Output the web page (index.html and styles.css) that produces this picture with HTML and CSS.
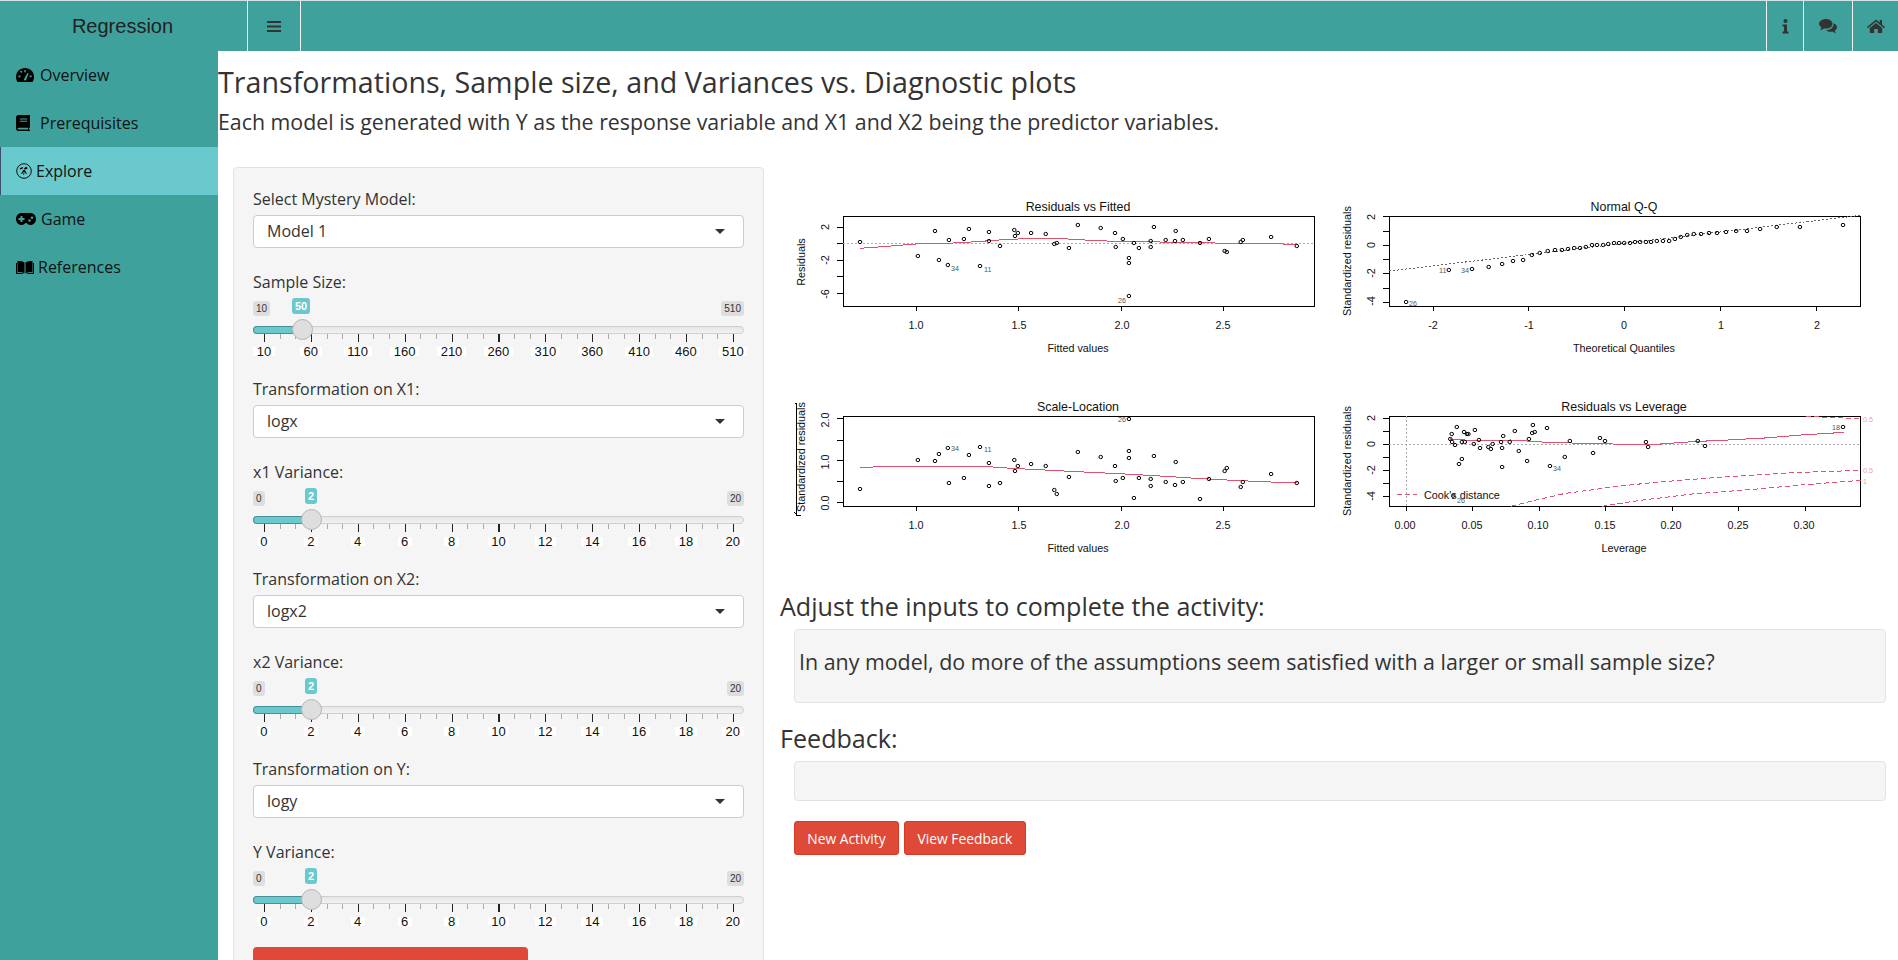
FILE: index.html
```html
<!DOCTYPE html>
<html lang="en">
<head>
<meta charset="utf-8">
<title>Regression</title>
<link rel="stylesheet" href="styles.css">
</head>
<body>
<header class="topbar">
  <div class="brand">Regression</div>
  <button class="nav-btn toggle" aria-label="Toggle menu">
    <svg class="ico-bars" viewBox="0 0 14 11"><path d="M0 0h14v2H0zM0 4.500h14v2H0zM0 9h14v2H0z"/></svg>
  </button>
  <div class="spacer"></div>
  <button class="nav-btn info" aria-label="Info">
    <svg class="ico-info" viewBox="0 0 7 15"><circle cx="3.500" cy="2" r="2"/><path d="M0.500 5.500h4.500v7h1.500v2H0.500v-2H2v-5H0.500z"/></svg>
  </button>
  <button class="nav-btn chat" aria-label="Comments">
    <svg class="ico-chat" viewBox="0 0 18 15"><path d="M7 0c3.900 0 6.500 2.200 6.500 4.800S10.900 9.600 7 9.600c-.7 0-1.300-.1-1.900-.2C3.900 10.300 2.600 10.800 1 11c.8-.8 1.300-1.700 1.400-2.700C.9 7.400 0 6.200 0 4.800 0 2.200 3.100 0 7 0z"/><path d="M14.600 4.300c2 .8 3.400 2.200 3.400 3.900 0 1.300-.8 2.500-2.200 3.300.1 1 .6 1.900 1.400 2.700-1.600-.2-2.900-.7-4-1.600-.6.100-1.200.2-1.900.2-1.900 0-3.600-.6-4.700-1.500 4.300 0 8.300-2.300 8-7z"/></svg>
  </button>
  <button class="nav-btn home" aria-label="Home">
    <svg class="ico-home" viewBox="0 0 18 14"><path d="M9 0.500 0 8l1 1.200L9 2.600l8 6.600L18 8l-3-2.500V1h-2.200v2.600z"/><path d="M9 4 2.800 9.100V14H7.200V10h3.600v4h4.400V9.100z"/></svg>
  </button>
</header>
<div class="body-row">
  <nav class="sidebar">
    <a class="nav-item"><svg class="nav-ico" viewBox="0 0 18 14"><path class="solid" d="M9 0C4 0 0 3.700 0 8.800c0 1.900.5 3.500 1.400 5.200h15.200c.9-1.700 1.400-3.300 1.400-5.200C18 3.700 14 0 9 0z"/><path class="cut" d="M8.200 2.200h1.600v2H8.200zM2.400 7.600h2v1.600h-2zM13.600 7.600h2v1.600h-2zM4 3.600l1.200-1.100 1.300 1.400-1.100 1.100zM7.900 11.500 11.300 5l1.300.6-2.600 6.600a1.300 1.300 0 0 1-2.100-.7z"/></svg><span>Overview</span></a>
    <a class="nav-item"><svg class="nav-ico book" viewBox="0 0 14 16"><path class="solid" d="M2.300 0H14v12.300l-.9.6c-.3.500-.3 1 0 1.500l.9.600V16H2.500C1 16 0 15 0 13.500V2.300C0 1 1 0 2.300 0z"/><path class="cut" d="M3.800 3.400h7.400v1H3.800zM3.800 5.800h7.400v1H3.800zM2.500 12.800h9.600c-.2.700-.2 1 0 1.800H2.500c-1.200 0-1.200-1.800 0-1.800z"/></svg><span>Prerequisites</span></a>
    <a class="nav-item active"><svg class="nav-ico explore" viewBox="0 0 16 16"><circle class="ring" cx="8" cy="8" r="7.300"/><path class="solid" d="M3.700 5.300l3-1.400.5 1.300-3 1.400zM8 5l2.800-1.200.8 1.700-2.800 1.200zM7.300 7h1.600l2 4h-1L8.600 8.600 8 12H7.400l.3-3.600L6 11H5z"/></svg><span>Explore</span></a>
    <a class="nav-item"><svg class="nav-ico pad" viewBox="0 0 20 12"><path class="solid" d="M5.500 0h9C17.600 0 20 2.600 20 6s-2.400 6-5.500 6c-1.700 0-3-.8-4-2h-1c-1 1.200-2.300 2-4 2C2.400 12 0 9.400 0 6s2.400-6 5.500-6z"/><path class="cut" d="M4.500 3h2v2h2v2h-2v2h-2V7h-2V5h2z"/><circle class="cut" cx="13.500" cy="7.500" r="1.300"/><circle class="cut" cx="16" cy="4.700" r="1.300"/></svg><span>Game</span></a>
    <a class="nav-item"><svg class="nav-ico open" viewBox="0 0 18 13"><path class="solid" d="M1.500 0C4 0 7 .2 8.500 1.600V12.300C7 11.400 4 11 1.500 11zM16.500 0C14 0 11 .2 9.500 1.600V12.300C11 11.400 14 11 16.500 11zM0 2h1v9.800c2.500 0 5 .2 7 1.200H0zM18 2h-1v9.800c-2.500 0-5 .2-7 1.200h8z"/></svg><span>References</span></a>
  </nav>
  <main class="content">
    <h1 class="page-title">Transformations, Sample size, and Variances vs. Diagnostic plots</h1>
    <h2 class="page-sub">Each model is generated with Y as the response variable and X1 and X2 being the predictor variables.</h2>
    <div class="columns">
      <form class="controls">
        <div class="field">
          <label>Select Mystery Model:</label>
          <div class="select">Model 1</div>
        </div>
        <div class="slider-field">
          <label>Sample Size:</label>
          <div class="slider">
            <span class="badge min">10</span><span class="badge max">510</span>
            <span class="bubble" style="left: 39px">50</span>
            <div class="track"><div class="fill" style="width: 48px"></div><div class="handle" style="left: 37.500px"></div></div>
            <div class="ticks"></div>
            <div class="tick-labels"><span>10</span><span>60</span><span>110</span><span>160</span><span>210</span><span>260</span><span>310</span><span>360</span><span>410</span><span>460</span><span>510</span></div>
          </div>
        </div>
        <div class="field">
          <label>Transformation on X1:</label>
          <div class="select">logx</div>
        </div>
        <div class="slider-field">
          <label>x1 Variance:</label>
          <div class="slider">
            <span class="badge min">0</span><span class="badge max">20</span>
            <span class="bubble" style="left: 52px">2</span>
            <div class="track"><div class="fill" style="width: 57px"></div><div class="handle" style="left: 46.500px"></div></div>
            <div class="ticks"></div>
            <div class="tick-labels"><span>0</span><span>2</span><span>4</span><span>6</span><span>8</span><span>10</span><span>12</span><span>14</span><span>16</span><span>18</span><span>20</span></div>
          </div>
        </div>
        <div class="field">
          <label>Transformation on X2:</label>
          <div class="select">logx2</div>
        </div>
        <div class="slider-field">
          <label>x2 Variance:</label>
          <div class="slider">
            <span class="badge min">0</span><span class="badge max">20</span>
            <span class="bubble" style="left: 52px">2</span>
            <div class="track"><div class="fill" style="width: 57px"></div><div class="handle" style="left: 46.500px"></div></div>
            <div class="ticks"></div>
            <div class="tick-labels"><span>0</span><span>2</span><span>4</span><span>6</span><span>8</span><span>10</span><span>12</span><span>14</span><span>16</span><span>18</span><span>20</span></div>
          </div>
        </div>
        <div class="field">
          <label>Transformation on Y:</label>
          <div class="select">logy</div>
        </div>
        <div class="slider-field">
          <label>Y Variance:</label>
          <div class="slider">
            <span class="badge min">0</span><span class="badge max">20</span>
            <span class="bubble" style="left: 52px">2</span>
            <div class="track"><div class="fill" style="width: 57px"></div><div class="handle" style="left: 46.500px"></div></div>
            <div class="ticks"></div>
            <div class="tick-labels"><span>0</span><span>2</span><span>4</span><span>6</span><span>8</span><span>10</span><span>12</span><span>14</span><span>16</span><span>18</span><span>20</span></div>
          </div>
        </div>
        <div class="wide-btn"></div>
      </form>
      <section class="results">
        <svg class="plots" viewBox="0 0 1118 380" role="img" aria-label="Diagnostic plots">
          <g class="panel" transform="scale(.35714 .33333)">
            <rect class="box" x="177" y="79" width="1320" height="270"/>
            <path class="axis" d="M382 349v15M669 349v15M957 349v15M1241 349v15M177 112h-16M177 161h-16M177 211h-16M177 261h-16M177 311h-16"/>
            <path class="ref" d="M177 160H1497"/>
            <path class="smooth" d="M224 175 300 169 380 162 470 160 550 155 640 148 720 145 790 146 870 151 960 155 1060 156 1170 157 1240 160 1330 160 1447 163"/>
            <g class="pts"><circle cx="224" cy="156"/><circle cx="386" cy="198"/><circle cx="434" cy="123"/><circle cx="445" cy="210"/><circle cx="470" cy="225"/><circle cx="473" cy="150"/><circle cx="515" cy="147"/><circle cx="529" cy="117"/><circle cx="560" cy="228"/><circle cx="585" cy="126"/><circle cx="585" cy="153"/><circle cx="616" cy="168"/><circle cx="656" cy="120"/><circle cx="658" cy="138"/><circle cx="666" cy="129"/><circle cx="703" cy="129"/><circle cx="744" cy="132"/><circle cx="768" cy="162"/><circle cx="775" cy="159"/><circle cx="809" cy="174"/><circle cx="834" cy="105"/><circle cx="898" cy="114"/><circle cx="938" cy="129"/><circle cx="940" cy="171"/><circle cx="960" cy="147"/><circle cx="977" cy="204"/><circle cx="977" cy="219"/><circle cx="977" cy="318"/><circle cx="991" cy="159"/><circle cx="1005" cy="174"/><circle cx="1038" cy="153"/><circle cx="1038" cy="171"/><circle cx="1047" cy="111"/><circle cx="1080" cy="150"/><circle cx="1106" cy="153"/><circle cx="1108" cy="123"/><circle cx="1128" cy="150"/><circle cx="1176" cy="159"/><circle cx="1201" cy="147"/><circle cx="1245" cy="183"/><circle cx="1251" cy="186"/><circle cx="1290" cy="156"/><circle cx="1296" cy="150"/><circle cx="1375" cy="141"/><circle cx="1447" cy="168"/></g>
          </g>
          <g class="panel" transform="scale(.35714 .33333)">
            <rect class="box" x="177" y="679" width="1320" height="270"/>
            <path class="axis" d="M382 949v15M669 949v15M957 949v15M1241 949v15M177 687h-16M177 751h-16M177 813h-16M177 875h-16M177 937h-16"/>
            <path class="smooth" d="M224 832 300 830 400 829 570 829 650 835 740 840 850 846 950 851 1050 857 1150 864 1250 870 1350 875 1447 879"/>
            <g class="pts"><circle cx="224" cy="897"/><circle cx="386" cy="810"/><circle cx="434" cy="813"/><circle cx="445" cy="792"/><circle cx="470" cy="774"/><circle cx="473" cy="879"/><circle cx="515" cy="864"/><circle cx="529" cy="795"/><circle cx="560" cy="771"/><circle cx="585" cy="819"/><circle cx="585" cy="888"/><circle cx="616" cy="879"/><circle cx="656" cy="810"/><circle cx="658" cy="843"/><circle cx="666" cy="828"/><circle cx="703" cy="822"/><circle cx="744" cy="828"/><circle cx="768" cy="900"/><circle cx="775" cy="912"/><circle cx="809" cy="861"/><circle cx="834" cy="786"/><circle cx="898" cy="801"/><circle cx="938" cy="828"/><circle cx="940" cy="873"/><circle cx="960" cy="864"/><circle cx="977" cy="783"/><circle cx="977" cy="804"/><circle cx="977" cy="687"/><circle cx="991" cy="924"/><circle cx="1005" cy="864"/><circle cx="1038" cy="867"/><circle cx="1038" cy="888"/><circle cx="1047" cy="798"/><circle cx="1080" cy="876"/><circle cx="1106" cy="885"/><circle cx="1108" cy="816"/><circle cx="1128" cy="876"/><circle cx="1176" cy="927"/><circle cx="1201" cy="867"/><circle cx="1245" cy="843"/><circle cx="1251" cy="834"/><circle cx="1290" cy="891"/><circle cx="1296" cy="876"/><circle cx="1375" cy="852"/><circle cx="1447" cy="879"/></g>
          </g>
          <g class="panel" transform="translate(550 0) scale(.36232 .33333)">
            <rect class="box" x="164" y="79" width="1301" height="270"/>
            <path class="axis" d="M286 349v15M549 349v15M813 349v15M1079 349v15M1344 349v15M164 81h-17M164 124h-17M164 166h-17M164 208h-17M164 252h-17M164 295h-17M164 338h-17"/>
            <path class="qq" d="M164 243 1465 76"/>
            <g class="pts"><circle cx="210" cy="336"/><circle cx="328" cy="240"/><circle cx="392" cy="237"/><circle cx="438" cy="231"/><circle cx="475" cy="222"/><circle cx="505" cy="213"/><circle cx="533" cy="210"/><circle cx="557" cy="195"/><circle cx="579" cy="189"/><circle cx="601" cy="183"/><circle cx="621" cy="180"/><circle cx="640" cy="180"/><circle cx="657" cy="177"/><circle cx="674" cy="174"/><circle cx="690" cy="174"/><circle cx="706" cy="171"/><circle cx="723" cy="165"/><circle cx="737" cy="165"/><circle cx="754" cy="165"/><circle cx="768" cy="162"/><circle cx="784" cy="159"/><circle cx="798" cy="159"/><circle cx="812" cy="159"/><circle cx="828" cy="159"/><circle cx="842" cy="156"/><circle cx="856" cy="156"/><circle cx="872" cy="156"/><circle cx="886" cy="156"/><circle cx="902" cy="153"/><circle cx="919" cy="153"/><circle cx="936" cy="153"/><circle cx="952" cy="147"/><circle cx="968" cy="141"/><circle cx="986" cy="135"/><circle cx="1004" cy="132"/><circle cx="1024" cy="132"/><circle cx="1046" cy="129"/><circle cx="1068" cy="129"/><circle cx="1093" cy="126"/><circle cx="1121" cy="123"/><circle cx="1151" cy="123"/><circle cx="1187" cy="117"/><circle cx="1233" cy="111"/><circle cx="1297" cy="111"/><circle cx="1416" cy="105"/></g>
          </g>
          <g class="panel" transform="translate(550 0) scale(.36232 .33333)">
            <rect class="box" x="164" y="679" width="1301" height="270"/>
            <path class="axis" d="M211 949v15M394 949v15M578 949v15M761 949v15M945 949v15M1128 949v15M1312 949v15M164 685h-17M164 724h-17M164 763h-17M164 802h-17M164 841h-17M164 880h-17M164 919h-17"/>
            <path class="ref" d="M164 763H1465M211 679V949"/>
            <path class="smooth" d="M332 747 400 752 500 750 600 757 700 760 820 763 900 763 1000 755 1100 750 1200 744 1300 735 1420 727"/>
            <path class="cook" d="M1315 679 1380 682 1465 686M500 949 560 932 650 910 720 900 800 888 900 877 1000 868 1100 860 1200 853 1300 847 1465 841M750 949 850 932 1000 912 1100 904 1200 895 1300 885 1465 871M185 914H240"/>
            <g class="pts"><circle cx="332" cy="747"/><circle cx="336" cy="732"/><circle cx="337" cy="756"/><circle cx="345" cy="765"/><circle cx="350" cy="711"/><circle cx="356" cy="822"/><circle cx="364" cy="807"/><circle cx="364" cy="756"/><circle cx="370" cy="726"/><circle cx="372" cy="756"/><circle cx="378" cy="732"/><circle cx="382" cy="732"/><circle cx="397" cy="762"/><circle cx="400" cy="720"/><circle cx="411" cy="750"/><circle cx="414" cy="774"/><circle cx="437" cy="771"/><circle cx="444" cy="777"/><circle cx="449" cy="762"/><circle cx="472" cy="756"/><circle cx="475" cy="774"/><circle cx="475" cy="831"/><circle cx="478" cy="738"/><circle cx="496" cy="756"/><circle cx="510" cy="723"/><circle cx="521" cy="783"/><circle cx="544" cy="813"/><circle cx="549" cy="747"/><circle cx="558" cy="729"/><circle cx="560" cy="705"/><circle cx="565" cy="726"/><circle cx="599" cy="714"/><circle cx="607" cy="828"/><circle cx="648" cy="801"/><circle cx="662" cy="753"/><circle cx="726" cy="789"/><circle cx="745" cy="744"/><circle cx="759" cy="753"/><circle cx="872" cy="756"/><circle cx="878" cy="771"/><circle cx="1015" cy="753"/><circle cx="1035" cy="768"/><circle cx="1416" cy="711"/><circle cx="340" cy="917"/></g>
          </g>
          <g class="labels">
            <text class="title" x="298" y="21">Residuals vs Fitted</text>
            <text class="title" x="298" y="221">Scale-Location</text>
            <text class="title" x="844" y="21">Normal Q-Q</text>
            <text class="title" x="844" y="221">Residuals vs Leverage</text>
            <text x="136" y="139">1.0</text><text x="239" y="139">1.5</text><text x="342" y="139">2.0</text><text x="443" y="139">2.5</text>
            <text x="136" y="339">1.0</text><text x="239" y="339">1.5</text><text x="342" y="339">2.0</text><text x="443" y="339">2.5</text>
            <text x="298" y="162">Fitted values</text>
            <text x="298" y="362">Fitted values</text>
            <text x="653" y="139">-2</text><text x="749" y="139">-1</text><text x="844" y="139">0</text><text x="941" y="139">1</text><text x="1037" y="139">2</text>
            <text x="844" y="162">Theoretical Quantiles</text>
            <text x="625" y="339">0.00</text><text x="692" y="339">0.05</text><text x="758" y="339">0.10</text><text x="825" y="339">0.15</text><text x="891" y="339">0.20</text><text x="958" y="339">0.25</text><text x="1024" y="339">0.30</text>
            <text x="844" y="362">Leverage</text>
            <text transform="translate(49 37) rotate(-90)">2</text>
            <text transform="translate(49 70) rotate(-90)">-2</text>
            <text transform="translate(49 104) rotate(-90)">-6</text>
            <text transform="translate(25 72) rotate(-90)">Residuals</text>
            <text transform="translate(49 230) rotate(-90)">2.0</text>
            <text transform="translate(49 272) rotate(-90)">1.0</text>
            <text transform="translate(49 313) rotate(-90)">0.0</text>
            <text transform="translate(25 267) rotate(-90)">Standardized residuals</text>
            <text transform="translate(595 27) rotate(-90)">2</text>
            <text transform="translate(595 55) rotate(-90)">0</text>
            <text transform="translate(595 83) rotate(-90)">-2</text>
            <text transform="translate(595 111) rotate(-90)">-4</text>
            <text transform="translate(571 71) rotate(-90)">Standardized residuals</text>
            <text transform="translate(595 228) rotate(-90)">2</text>
            <text transform="translate(595 254) rotate(-90)">0</text>
            <text transform="translate(595 280) rotate(-90)">-2</text>
            <text transform="translate(595 306) rotate(-90)">-4</text>
            <text transform="translate(571 271) rotate(-90)">Standardized residuals</text>
            <text class="legend" x="644" y="309">Cook's distance</text>
          </g>
          <path class="root" d="M14.700 213H16V325H21M14 322l3 3"/>
          <g class="ids">
            <text x="171" y="81">34</text><text x="204" y="82">11</text><text x="338" y="113">26</text>
            <text x="171" y="261">34</text><text x="204" y="262">11</text><text x="338" y="232">26</text>
            <text x="659" y="83">11</text><text x="681" y="83">34</text><text x="629" y="116">26</text>
            <text x="1052" y="240">18</text><text x="773" y="281">34</text><text x="677" y="313">26</text>
          </g>
          <g class="ids cook-ids">
            <text x="1083" y="232">0.5</text><text x="1083" y="283">0.5</text><text x="1083" y="294">1</text>
          </g>
        </svg>
        <h3 class="section-head first">Adjust the inputs to complete the activity:</h3>
        <div class="well question">In any model, do more of the assumptions seem satisfied with a larger or small sample size?</div>
        <h3 class="section-head second">Feedback:</h3>
        <div class="well feedback"></div>
        <div class="actions">
          <button class="btn new" type="button">New Activity</button>
          <button class="btn view" type="button">View Feedback</button>
        </div>
      </section>
    </div>
  </main>
</div>
</body>
</html>
```
FILE: styles.css
```css
* { box-sizing: border-box; }
html, body { margin: 0; height: 960px; overflow: hidden; }
body {
  width: 1898px;
  display: flex;
  flex-direction: column;
  font-family: "Open Sans", "Noto Sans", sans-serif;
  color: #333;
  background: #fff;
}

/* Top bar */
.topbar {
  flex: 0 0 51px;
  display: flex;
  background: #3fa19c;
  border-top: 1px solid #cfe6e4;
}
.brand {
  width: 247px;
  padding-right: 2px;
  font: 20px/50px "Liberation Sans", sans-serif;
  color: #222;
  text-align: center;
}
.spacer { flex: 1; border-left: 1px solid #f2f2f2; }
.nav-btn {
  display: flex;
  align-items: center;
  justify-content: center;
  padding: 0;
  background: none;
  border: 0;
  border-left: 1px solid #f2f2f2;
  fill: #333;
}
.toggle { width: 53px; }
.spacer + .info { width: 37px; }
.chat { width: 49px; }
.home { width: 46px; }
.ico-bars { width: 14px; height: 11px; }
.ico-info { width: 7px; height: 15px; }
.ico-chat { width: 18px; height: 15px; }
.ico-home { width: 18px; height: 14px; }

/* Sidebar */
.body-row { flex: 1; display: flex; min-height: 0; }
.sidebar { width: 218px; flex: none; background: #3fa19c; }
.nav-item {
  height: 48px;
  display: flex;
  align-items: center;
  padding-left: 16px;
  font-size: 16px;
  color: #111;
}
.nav-item.active { background: #69c9cc; border-left: 1px solid #3d4f6b; padding-left: 15px; }
.nav-ico { width: 18px; height: 14px; margin-right: 6px; }
.nav-ico.book { width: 14px; height: 16px; margin-right: 10px; }
.nav-ico.explore { width: 16px; height: 16px; margin-right: 4px; }
.nav-ico.pad { width: 20px; height: 12px; margin-right: 5px; }
.nav-ico.open { width: 18px; height: 13px; margin-right: 4px; }
.solid { fill: #000; }
.cut { fill: #3fa19c; }
.ring { fill: none; stroke: #111; stroke-width: 1; }

/* Content */
.content { flex: 1; min-width: 0; }
.page-title {
  margin: 11px 0 0;
  font-size: 28.670px;
  line-height: 40px;
  font-weight: 400;
}
.page-sub {
  margin: 5px 0 0;
  font-size: 21.350px;
  line-height: 30px;
  font-weight: 400;
}
.columns { display: flex; margin: 30px 0 0 15px; align-items: flex-start; }

/* Control panel */
.controls {
  flex: none;
  width: 531px;
  height: 820px;
  padding: 19px 19px;
  background: #f5f5f5;
  border: 1px solid #e3e3e3;
  border-radius: 4px;
}
.controls label { display: block; padding-top: 1px; font-size: 16px; line-height: 22px; }
.field { margin-bottom: 22px; }
.select {
  position: relative;
  height: 33px;
  margin-top: 5px;
  padding-left: 13px;
  font-size: 16px;
  line-height: 31px;
  color: #333;
  background: #fff;
  border: 1px solid #ccc;
  border-radius: 4px;
}
.select::after {
  content: "";
  position: absolute;
  right: 18px;
  top: 13px;
  border: 5px solid transparent;
  border-bottom: 0;
  border-top-color: #333;
}
.slider-field { height: 107px; }
.slider { position: relative; padding-top: 33px; }
.badge {
  position: absolute;
  top: 8px;
  padding: 0 3px;
  font: 10px/15px "Liberation Sans", sans-serif;
  color: #333;
  background: #dedede;
  border-radius: 3px;
}
.badge.min { left: 0; }
.badge.max { right: 0; }
.bubble {
  position: absolute;
  top: 5px;
  padding: 0 3px;
  font: 700 11px/16px "Liberation Sans", sans-serif;
  color: #fff;
  background: #69c9cc;
  border-radius: 3px;
}
.track {
  position: relative;
  height: 8px;
  background: linear-gradient(#e6e6e6, #f2f2f2);
  border: 1px solid #cfcfcf;
  border-radius: 4px;
}
.fill {
  height: 8px;
  margin: -1px;
  background: #69c9cc;
  border: 1px solid #4b8f96;
  border-right: 0;
  border-radius: 4px 0 0 4px;
}
.handle {
  position: absolute;
  top: -8px;
  width: 21px;
  height: 21px;
  background: #dedede;
  border: 1px solid #b5b5b5;
  border-radius: 50%;
  z-index: 1;
}
.ticks {
  height: 8px;
  margin: 0 10px 0 11px;
  background:
    repeating-linear-gradient(90deg, #222 0 1px, transparent 1px 46.900px) 0 0 / 100% 8px no-repeat,
    repeating-linear-gradient(90deg, #aaa 0 1px, transparent 1px 15.633px) 0 0 / 100% 5px no-repeat;
}
.tick-labels {
  display: grid;
  grid-template-columns: repeat(11, 46.900px);
  margin: 5px 0 0 -12.500px;
  justify-items: center;
}
.tick-labels span {
  padding: 0 3.500px;
  font: 13px/9px "Liberation Sans", sans-serif;
  color: #111;
  background: #fff;
  white-space: nowrap;
}
.wide-btn {
  width: 275px;
  height: 40px;
  margin-top: 0;
  background: #de4a37;
  border-radius: 4px;
}

/* Results column */
.results { flex: 1; min-width: 0; margin-left: 16px; padding-top: 23px; }
.plots { display: block; width: 1118px; height: 380px; }
.box, .axis, .ref, .smooth, .qq, .cook, .pts circle, .root {
  fill: none;
  vector-effect: non-scaling-stroke;
}
.box, .axis, .root, .smooth, .cook, .ref, .qq { shape-rendering: crispEdges; }
.box, .axis { stroke: #000; stroke-width: 1; }
.ref { stroke: #aaa; stroke-width: 1; stroke-dasharray: 2 2; }
.qq { stroke: #666; stroke-width: 1; stroke-dasharray: 2 2; }
.smooth { stroke: #df536b; stroke-width: 1; }
.cook { stroke: #df536b; stroke-width: 1; stroke-dasharray: 5 3; }
.pts circle { r: 5px; stroke: #000; stroke-width: 1; }
.root { stroke: #000; stroke-width: 1; }
.labels text { font: 10.800px "Liberation Sans", sans-serif; text-anchor: middle; fill: #111; }
.labels .title { font-size: 12.400px; }
.labels .legend { text-anchor: start; }
.ids text { font: 7.200px "Liberation Sans", sans-serif; fill: #555; }
.cook-ids text { fill: #f29bb1; }

.section-head {
  margin: 19px 0 6px;
  font-size: 25.100px;
  line-height: 34px;
  font-weight: 400;
}
.section-head.second { margin: 18px 0 6px; }
.well {
  margin-left: 14px;
  width: 1092px;
  background: #f5f5f5;
  border: 1px solid #e3e3e3;
  border-radius: 4px;
}
.question {
  height: 74px;
  padding: 16px 0 0 4px;
  font-size: 21.400px;
  line-height: 32px;
}
.feedback { height: 40px; }
.actions { display: flex; gap: 5px; margin: 20px 0 0 14px; }
.btn {
  height: 34px;
  padding: 0;
  font-family: inherit;
  font-size: 13.800px;
  color: #fff;
  background: #de4a37;
  border: 1px solid #d73925;
  border-radius: 3px;
}
.btn.new { width: 105px; }
.btn.view { width: 122px; }
```
